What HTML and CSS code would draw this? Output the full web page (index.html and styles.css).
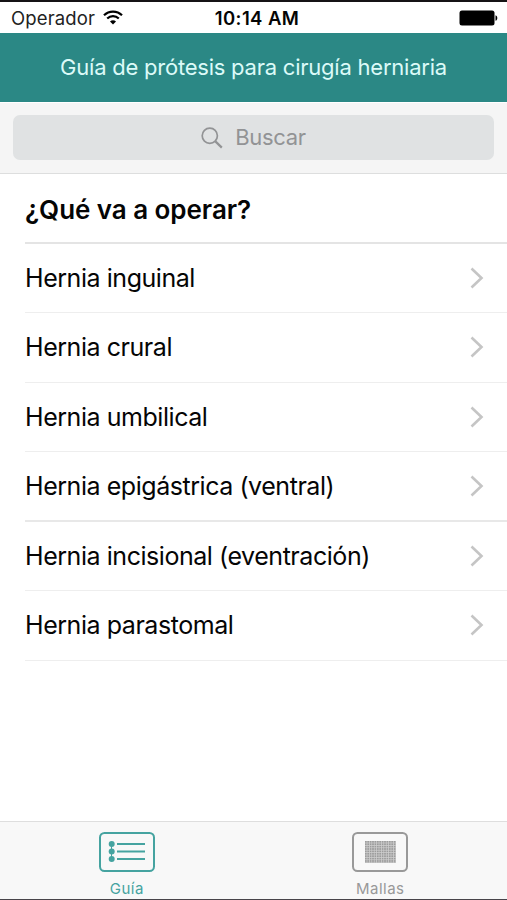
FILE: index.html
```html
<!DOCTYPE html>
<html lang="es">
<head>
  <meta charset="UTF-8">
  <meta name="viewport" content="width=device-width, initial-scale=1.0">
  <title>Guía de prótesis para cirugía herniaria</title>
  <link rel="stylesheet" href="styles.css">
</head>
<body>

  <div class="status-bar">
    <div class="carrier">
      <span class="carrier-name">Operador</span>
      <svg class="wifi" width="20" height="15" viewBox="0 0 20 15" fill="none" stroke="#000" stroke-width="2.2">
        <path d="M1 5.2C6 .3 14 .3 19 5.2"/>
        <path d="M4.2 8.5c3.3-3.2 8.3-3.2 11.6 0"/>
        <path d="M10 14.6l-3-3.2c1.7-1.6 4.3-1.6 6 0z" fill="#000" stroke="none"/>
      </svg>
    </div>
    <span class="time">10:14 AM</span>
    <svg class="battery" width="39" height="16" viewBox="0 0 39 16">
      <rect x=".5" y=".5" width="35" height="15" rx="2.5"/>
      <path d="M36.5 5.2c2.4.7 2.4 4.9 0 5.6z"/>
    </svg>
  </div>

  <header class="nav-bar">
    <h1 class="nav-title">Guía de prótesis para cirugía herniaria</h1>
  </header>

  <div class="search-bar">
    <div class="search-field">
      <svg class="search-icon" width="22" height="22" viewBox="0 0 22 22" fill="none" stroke="#929395">
        <circle cx="8.8" cy="8.8" r="7.6" stroke-width="1.7"/>
        <path d="M14.4 14.4l6.4 6.2" stroke-width="2.2"/>
      </svg>
      <span class="search-text">Buscar</span>
    </div>
  </div>

  <main class="list">
    <h2 class="list-title">¿Qué va a operar?</h2>
    <div class="row">
      <span>Hernia inguinal</span>
      <svg class="chevron" width="14" height="22" viewBox="0 0 14 22"><path d="M1.5 1.5l10 9.5-10 9.5"/></svg>
    </div>
    <div class="row">
      <span>Hernia crural</span>
      <svg class="chevron" width="14" height="22" viewBox="0 0 14 22"><path d="M1.5 1.5l10 9.5-10 9.5"/></svg>
    </div>
    <div class="row">
      <span>Hernia umbilical</span>
      <svg class="chevron" width="14" height="22" viewBox="0 0 14 22"><path d="M1.5 1.5l10 9.5-10 9.5"/></svg>
    </div>
    <div class="row strong-line">
      <span>Hernia epigástrica (ventral)</span>
      <svg class="chevron" width="14" height="22" viewBox="0 0 14 22"><path d="M1.5 1.5l10 9.5-10 9.5"/></svg>
    </div>
    <div class="row">
      <span>Hernia incisional (eventración)</span>
      <svg class="chevron" width="14" height="22" viewBox="0 0 14 22"><path d="M1.5 1.5l10 9.5-10 9.5"/></svg>
    </div>
    <div class="row">
      <span>Hernia parastomal</span>
      <svg class="chevron" width="14" height="22" viewBox="0 0 14 22"><path d="M1.5 1.5l10 9.5-10 9.5"/></svg>
    </div>
  </main>

  <nav class="tab-bar">
    <div class="tab active">
      <svg width="56" height="40" viewBox="0 0 56 40" fill="none" stroke="currentColor">
        <rect x="1" y="1" width="54" height="38" rx="4.5" stroke-width="2"/>
        <path d="M18 12h28M18 19.5h28M18 27h28" stroke-width="2"/>
        <path d="M12.5 12v15" stroke-width="1"/>
        <g fill="currentColor" stroke="none">
          <circle cx="12.7" cy="12" r="3"/>
          <circle cx="12.7" cy="19.5" r="3"/>
          <circle cx="12.7" cy="27" r="3"/>
        </g>
      </svg>
      <span>Guía</span>
    </div>
    <div class="tab">
      <svg width="56" height="40" viewBox="0 0 56 40" fill="none" stroke="currentColor">
        <defs>
          <pattern id="mesh" x="13" y="9" width="2.4" height="2.4" patternUnits="userSpaceOnUse">
            <rect width="2.4" height="2.4" fill="#cfcfcf" stroke="none"/>
            <rect width="1.7" height="1.7" fill="#9c9c9c" stroke="none"/>
          </pattern>
        </defs>
        <rect x="1" y="1" width="54" height="38" rx="4.5" stroke-width="2"/>
        <rect x="13" y="9" width="31" height="22" fill="url(#mesh)" stroke="none"/>
      </svg>
      <span>Mallas</span>
    </div>
  </nav>

</body>
</html>
```

FILE: styles.css
```css
* {
  box-sizing: border-box;
}

body {
  margin: 0;
  height: 900px;
  display: flex;
  flex-direction: column;
  overflow: hidden;
  background-color: #ffffff;
  color: #050505;
  font-family: Inter, "Liberation Sans", sans-serif;
  border-top: 2px solid #151315;
  border-bottom: 1px solid #48444a;
}

h1, h2 {
  margin: 0;
}

.status-bar {
  flex: none;
  height: 31px;
  padding: 1px 9px 0 11px;
  display: grid;
  grid-template-columns: 1fr auto 1fr;
  align-items: center;
  font-size: 18.5px;
}

.carrier {
  display: flex;
  align-items: center;
  gap: 8px;
  color: #222222;
}

.carrier-name {
  letter-spacing: 0.15px;
}

.wifi {
  margin-bottom: 2px;
}

.time {
  padding-left: 5px;
  font-weight: 600;
  letter-spacing: 0.4px;
}

.battery {
  justify-self: end;
  margin-bottom: 1px;
}

.nav-bar {
  flex: none;
  height: 69px;
  padding-bottom: 2px;
  display: flex;
  align-items: center;
  justify-content: center;
  background-color: #2b8885;
}

.nav-title {
  color: #dcfaf8;
  font-size: 22px;
  font-weight: 400;
  letter-spacing: -0.23px;
  white-space: nowrap;
}

.search-bar {
  flex: none;
  height: 72px;
  padding: 12px 13px 13px;
  border-top: 1px solid #ffffff;
  border-bottom: 1px solid #dddede;
  background-color: #f5f5f5;
}

.search-field {
  height: 45px;
  display: flex;
  align-items: center;
  justify-content: center;
  gap: 12px;
  border-radius: 7px;
  background-color: #e0e2e3;
  color: #929395;
  font-size: 22px;
  letter-spacing: -0.35px;
}

.search-text {
  padding-bottom: 2px;
}

.list {
  flex: 1;
  padding-left: 25px;
}

.list-title {
  height: 69.5px;
  display: flex;
  align-items: center;
  padding-top: 3px;
  border-bottom: 2px solid #e4e4e4;
  font-size: 26px;
  font-weight: 600;
  letter-spacing: -0.05px;
}

.row {
  height: 69.5px;
  display: flex;
  align-items: center;
  justify-content: space-between;
  padding-right: 23px;
  border-bottom: 1px solid #eeeeee;
  font-size: 25px;
  letter-spacing: -0.45px;
}

.strong-line {
  border-bottom: 2px solid #e8e8e8;
}

.chevron {
  fill: none;
  stroke: #c5c5c5;
  stroke-width: 2.6;
}

.tab-bar {
  flex: none;
  height: 78px;
  display: flex;
  border-top: 1px solid #dedede;
  background-color: #f8f8f8;
}

.tab {
  flex: 1;
  display: flex;
  flex-direction: column;
  align-items: center;
  padding-top: 10px;
  gap: 7px;
  color: #999999;
  font-size: 15px;
  line-height: 20px;
  letter-spacing: 0.5px;
}

.active {
  color: #45a3a0;
}
```
